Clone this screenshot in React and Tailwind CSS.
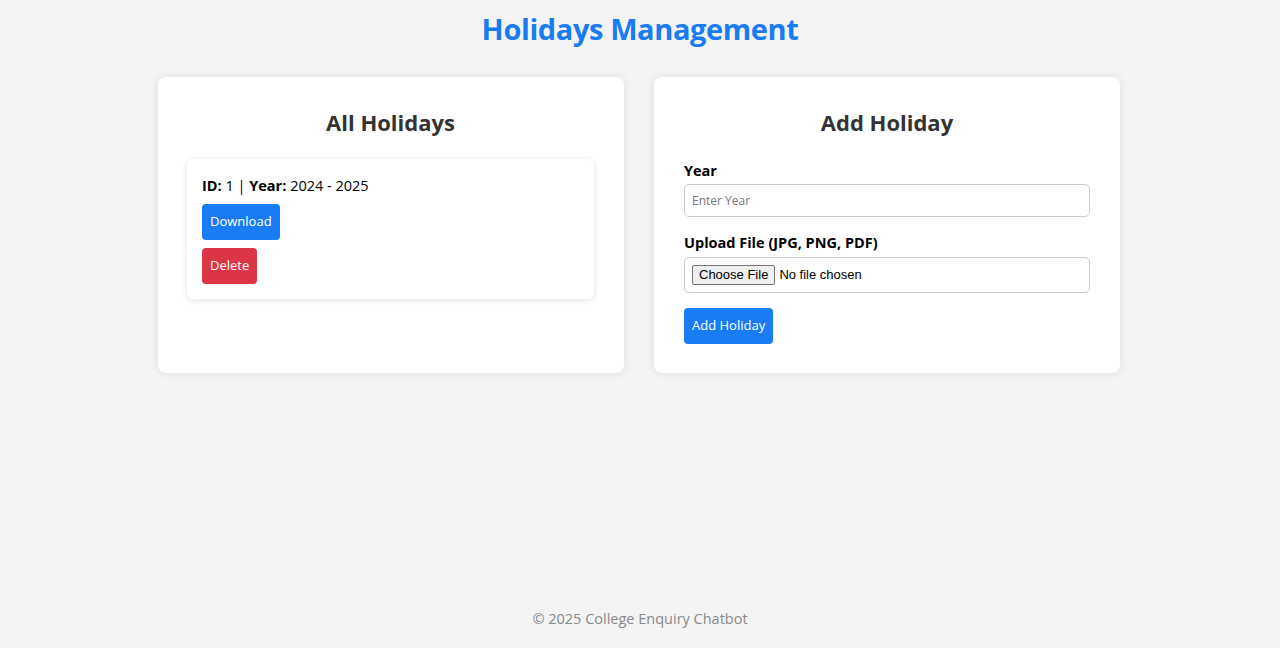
import React, { useState } from "react";

export default function App() {
  const [year, setYear] = useState("");
  const holidays = [{ id: 1, year: "2024 - 2025" }];

  return (
    <div
      className="min-h-screen flex flex-col bg-[#f4f4f4] text-[#333]"
      style={{ fontFamily: '"Open Sans", "Noto Sans", sans-serif' }}
    >
      <main className="flex-1">
        <h1 className="text-center text-[29px] font-bold text-[#1a7cf2] pt-[9px] leading-[40px] tracking-[-0.4px]">
          Holidays Management
        </h1>

        <div className="flex justify-center gap-[30px] mt-[28px] pr-[2px]">
          <div className="w-[466px] h-[296px] bg-white rounded-lg shadow-[0_0_8px_rgba(0,0,0,0.1)] pl-[29px] pr-[30px] pt-[29px]">
            <h2 className="text-center text-[22px] font-bold leading-[32px] text-[#333]">All Holidays</h2>
            <div className="mt-[21px] flex flex-col gap-[16px]">
              {holidays.map((h) => (
                <div
                  key={h.id}
                  className="bg-white rounded-md shadow-[0_1px_6px_rgba(0,0,0,0.12)] p-[15px] pt-[17px]"
                >
                  <p className="text-[14.5px] leading-[20px] text-black">
                    <strong>ID:</strong> {h.id} | <strong>Year:</strong> {h.year}
                  </p>
                  <div className="flex flex-col items-start gap-[8px] mt-[8px]">
                    <button className="h-[36px] px-[8px] rounded bg-[#1a7cf5] text-white text-[13px]">
                      Download
                    </button>
                    <button className="h-[36px] px-[8px] rounded bg-[#dc3545] text-white text-[13px]">
                      Delete
                    </button>
                  </div>
                </div>
              ))}
            </div>
          </div>

          <div className="w-[466px] h-[296px] bg-white rounded-lg shadow-[0_0_8px_rgba(0,0,0,0.1)] px-[30px] pt-[29px]">
            <h2 className="text-center text-[22px] font-bold leading-[32px] text-[#333]">Add Holiday</h2>
            <form className="mt-[23px]" onSubmit={(e) => e.preventDefault()}>
              <label className="block text-[14.5px] font-bold text-black leading-[20px]">Year</label>
              <input
                type="text"
                value={year}
                onChange={(e) => setYear(e.target.value)}
                placeholder="Enter Year"
                className="mt-[3px] w-full h-[33px] border border-[#ccc] rounded-[5px] px-[7px] text-[12px] placeholder:text-[#777] outline-none"
              />
              <label className="block mt-[16px] text-[14.5px] font-bold text-black leading-[20px]">
                Upload File (JPG, PNG, PDF)
              </label>
              <div
                className="mt-[4px] w-full h-[36px] border border-[#ccc] rounded-[5px] px-[7px] flex items-center gap-[4px] text-[13px] text-black"
                style={{ fontFamily: '"Liberation Sans", Arial, sans-serif' }}
              >
                <span className="h-[20px] px-[6px] border border-[#767676] bg-[#efefef] rounded-[2px] flex items-center">
                  Choose File
                </span>
                <span>No file chosen</span>
              </div>
              <button className="mt-[15px] h-[36px] px-[8px] rounded bg-[#1a7cf5] text-white text-[13px]">
                Add Holiday
              </button>
            </form>
          </div>
        </div>
      </main>

      <footer className="text-center text-[14.5px] text-[#888] pb-[18px]">
        © 2025 College Enquiry Chatbot
      </footer>
    </div>
  );
}
